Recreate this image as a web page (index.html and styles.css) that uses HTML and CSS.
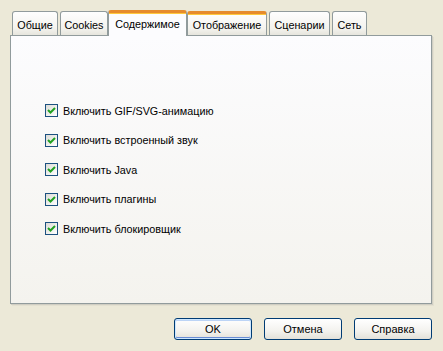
FILE: index.html
```html
<!DOCTYPE html>
<html lang="ru">
<head>
    <meta charset="UTF-8">
    <title>Настройки</title>
    <link rel="stylesheet" href="styles.css">
</head>
<body>
    <div class="dialog">
        <div class="tabs">
            <div class="tab w-general">Общие</div>
            <div class="tab w-cookies">Cookies</div>
            <div class="tab selected w-content">Содержимое</div>
            <div class="tab hover w-display">Отображение</div>
            <div class="tab w-scripts">Сценарии</div>
            <div class="tab w-net">Сеть</div>
        </div>
        <div class="panel">
            <div class="options">
                <label class="option"><span class="check"><svg viewBox="0 0 9 9"><path d="M1 4 L3.5 6.5 L8 2" fill="none" stroke="#21a121" stroke-width="2"/></svg></span>Включить GIF/SVG-анимацию</label>
                <label class="option"><span class="check"><svg viewBox="0 0 9 9"><path d="M1 4 L3.5 6.5 L8 2" fill="none" stroke="#21a121" stroke-width="2"/></svg></span>Включить встроенный звук</label>
                <label class="option"><span class="check"><svg viewBox="0 0 9 9"><path d="M1 4 L3.5 6.5 L8 2" fill="none" stroke="#21a121" stroke-width="2"/></svg></span>Включить Java</label>
                <label class="option"><span class="check"><svg viewBox="0 0 9 9"><path d="M1 4 L3.5 6.5 L8 2" fill="none" stroke="#21a121" stroke-width="2"/></svg></span>Включить плагины</label>
                <label class="option"><span class="check"><svg viewBox="0 0 9 9"><path d="M1 4 L3.5 6.5 L8 2" fill="none" stroke="#21a121" stroke-width="2"/></svg></span>Включить блокировщик</label>
            </div>
        </div>
        <div class="buttons">
            <button class="btn default">OK</button>
            <button class="btn">Отмена</button>
            <button class="btn">Справка</button>
        </div>
    </div>
</body>
</html>
```

FILE: styles.css
```css
body {
    margin: 0;
    width: 443px;
    height: 351px;
    background: #ece9d8;
    font-family: "Liberation Sans", Arial, sans-serif;
    font-size: 10.8px;
    color: #000;
    overflow: hidden;
}
.dialog {
    padding: 10px 10px 0 10px;
}
.tabs {
    display: flex;
    align-items: flex-end;
    height: 26px;
    padding-left: 2px;
    margin-bottom: -1px;
    position: relative;
    z-index: 1;
}
.tab {
    box-sizing: border-box;
    height: 24px;
    margin-right: 2px;
    margin-bottom: 1px;
    border: 1px solid #919b9c;
    border-bottom: none;
    border-radius: 3px 3px 0 0;
    background: linear-gradient(to bottom, #fefefe, #f4f3ee 70%, #e6e5dd);
    display: flex;
    align-items: center;
    justify-content: center;
    padding-top: 2px;
    white-space: nowrap;
}
.tab.selected {
    height: 26px;
    margin: 0 0 0 -2px;
    background: #fcfcfe;
    border-top: 3px solid #e68b2c;
    box-shadow: inset 0 1px 0 #ffc83c;
    padding-top: 0;
    padding-bottom: 2px;
}
.tab.hover {
    border-top: 3px solid #e68b2c;
    box-shadow: inset 0 1px 0 #ffc83c;
    padding-top: 0;
}
.w-general { width: 46px; }
.w-cookies { width: 48px; }
.w-content { width: 79px; }
.w-display { width: 80px; }
.w-scripts { width: 61px; }
.w-net { width: 35px; }
.panel {
    box-sizing: border-box;
    width: 422px;
    height: 269px;
    border: 1px solid #919b9c;
    background: linear-gradient(to bottom, #fcfcfe, #f4f3ee);
    box-shadow: 1px 1px 0 #d0cec3, 2px 2px 0 #e3e0d0;
}
.options {
    display: flex;
    flex-direction: column;
    gap: 16.6px;
    padding: 68px 0 0 34px;
}
.option {
    display: flex;
    align-items: center;
    height: 13px;
    gap: 5px;
}
.check {
    box-sizing: border-box;
    width: 13px;
    height: 13px;
    border: 1px solid #1c5180;
    background: linear-gradient(135deg, #dcdcd7, #fff);
    display: flex;
    align-items: center;
    justify-content: center;
}
.check svg {
    width: 9px;
    height: 9px;
}
.buttons {
    display: flex;
    justify-content: flex-end;
    gap: 12px;
    padding: 14px 1px 0 0;
}
.btn {
    box-sizing: border-box;
    width: 78px;
    height: 22px;
    border: 1px solid #003c74;
    border-radius: 3px;
    background: linear-gradient(to bottom, #fff, #f3f2ee 60%, #e3e1d9);
    font-family: inherit;
    font-size: 11px;
    color: #000;
    padding: 0;
}
.btn.default {
    box-shadow: inset 0 0 0 1px #cee7ff, inset 0 -1px 0 1px #698cd5, inset 0 1px 0 1px #bcd4f6;
}
```
